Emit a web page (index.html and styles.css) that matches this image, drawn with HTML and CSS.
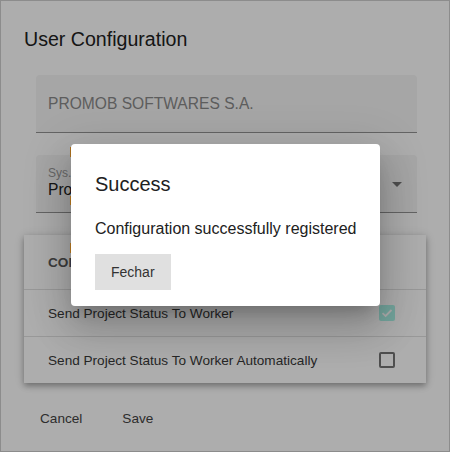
FILE: index.html
```html
<!DOCTYPE html>
<html lang="en">

<head>
    <meta charset="UTF-8">
    <meta name="viewport" content="width=device-width, initial-scale=1.0">
    <title>User Configuration</title>
    <link rel="stylesheet" href="styles.css">
</head>

<body>
    <div class="dialog">
        <h2 class="dialog-title">User Configuration</h2>

        <div class="field field-plain">PROMOB SOFTWARES S.A.</div>

        <div class="field field-select">
            <div>
                <span class="field-label">Sys. Integration</span>
                <span class="field-value">Promob</span>
            </div>
            <span class="arrow"></span>
        </div>

        <div class="card">
            <div class="card-header">CONFIGURATION</div>
            <div class="card-row">
                <span>Send Project Status To Worker</span>
                <span class="check checked">
                    <svg width="16" height="16" viewBox="0 0 16 16">
                        <polyline points="3.5,8.2 6.6,11 12.5,5" fill="none" stroke="#fff" stroke-width="1.8" />
                    </svg>
                </span>
            </div>
            <div class="card-row">
                <span>Send Project Status To Worker Automatically</span>
                <span class="check"></span>
            </div>
        </div>

        <div class="actions">
            <button class="btn-flat">Cancel</button>
            <button class="btn-flat">Save</button>
        </div>
    </div>

    <!-- success dialog over the config dialog -->
    <div class="backdrop"></div>
    <div class="modal">
        <span class="mark mark-1"></span>
        <span class="mark mark-2"></span>
        <span class="mark mark-3"></span>
        <h2 class="modal-title">Success</h2>
        <p class="modal-text">Configuration successfully registered</p>
        <button class="btn-close">Fechar</button>
    </div>
</body>

</html>
```

FILE: styles.css
```css
body {
    margin: 0;
    width: 450px;
    height: 452px;
    position: relative;
    overflow: hidden;
    font-family: "Liberation Sans", Arial, sans-serif;
}

.dialog {
    box-sizing: border-box;
    height: 452px;
    border: 1px solid #cfcfcf;
    background: #fff;
    padding: 22px 23px 0;
}

.dialog-title {
    margin: 0 0 20px;
    font-size: 19.6px;
    font-weight: normal;
    line-height: 32px;
    color: #212121;
}

.field {
    box-sizing: border-box;
    width: 381px;
    height: 58px;
    margin: 0 0 22px 12px;
    padding: 0 15px 0 12px;
    background: #f5f5f5;
    border-bottom: 1px solid #949494;
    border-radius: 4px 4px 0 0;
}

.field-plain {
    display: flex;
    align-items: center;
    font-size: 15.6px;
    color: #8a8a8a;
}

.field-select {
    display: flex;
    justify-content: space-between;
    align-items: flex-start;
    padding-top: 11px;
}

.field-label {
    display: block;
    font-size: 12px;
    line-height: 14px;
    color: #999;
}

.field-value {
    display: block;
    font-size: 15.6px;
    line-height: 20px;
    color: #212121;
}

.arrow {
    margin-top: 16px;
    border-left: 5px solid transparent;
    border-right: 5px solid transparent;
    border-top: 5px solid #757575;
}

.card {
    background: #fff;
    box-shadow: 0 3px 6px rgba(0, 0, 0, 0.3), 0 1px 10px rgba(0, 0, 0, 0.12);
    margin-bottom: 17px;
}

.card-header {
    height: 54px;
    display: flex;
    align-items: center;
    padding: 0 24px;
    border-bottom: 1px solid #e0e0e0;
    font-size: 13.6px;
    font-weight: bold;
    color: #5a5a5a;
}

.card-row {
    height: 46px;
    display: flex;
    align-items: center;
    justify-content: space-between;
    padding: 0 31px 0 24px;
    font-size: 13.6px;
    color: #3a3a3a;
}

.card-row + .card-row {
    border-top: 1px solid #e0e0e0;
}

.check {
    box-sizing: border-box;
    width: 16px;
    height: 16px;
    border: 2px solid #757575;
    border-radius: 2px;
}

.check.checked {
    border: 0;
    background: #abf4e8;
}

.check svg {
    display: block;
}

.actions {
    display: flex;
    gap: 8px;
}

.btn-flat {
    height: 36px;
    padding: 0 16px;
    border: 0;
    background: none;
    font-family: inherit;
    font-size: 13.6px;
    color: #444;
}

.backdrop {
    position: absolute;
    top: 0;
    left: 0;
    right: 0;
    bottom: 0;
    background: rgba(0, 0, 0, 0.32);
}

.modal {
    position: absolute;
    left: 71px;
    top: 144px;
    width: 309px;
    box-sizing: border-box;
    padding: 24px 24px 16px;
    background: #fff;
    border-radius: 4px;
    box-shadow: 0 11px 15px -7px rgba(0, 0, 0, 0.2), 0 24px 38px 3px rgba(0, 0, 0, 0.14), 0 9px 46px 8px rgba(0, 0, 0, 0.12);
}

.modal-title {
    margin: 0 0 17px;
    font-size: 20px;
    font-weight: normal;
    line-height: 32px;
    color: #212121;
}

.modal-text {
    margin: 0 0 13px;
    font-size: 16px;
    line-height: 24px;
    color: #212121;
    white-space: nowrap;
}

.btn-close {
    height: 36px;
    min-width: 64px;
    padding: 0 16px;
    border: 0;
    background: #e0e0e0;
    font-family: inherit;
    font-size: 14px;
    color: #333;
}

.mark {
    position: absolute;
    left: -1px;
    width: 1px;
    background: #a0691c;
}

.mark-1 {
    top: 3px;
    height: 10px;
}

.mark-2 {
    top: 52px;
    height: 9px;
}

.mark-3 {
    top: 99px;
    height: 10px;
}
```
